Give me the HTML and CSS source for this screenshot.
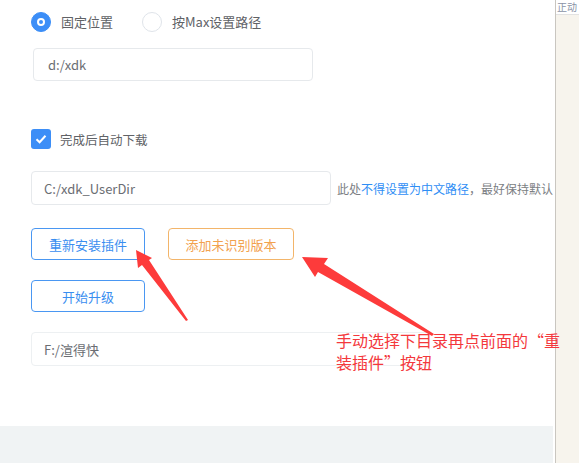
FILE: index.html
```html
<!DOCTYPE html>
<html lang="zh-CN">
<head>
<meta charset="utf-8">
<title>设置</title>
<link rel="stylesheet" href="styles.css">
</head>
<body>
<div class="page">
  <div class="panel">
    <div class="content">
      <div class="radio-row">
        <label class="radio"><span class="radio-dot checked"></span><span class="radio-label">固定位置</span></label>
        <label class="radio"><span class="radio-dot"></span><span class="radio-label">按Max设置路径</span></label>
      </div>
      <div class="input input-a">d:/xdk</div>
      <label class="check-row"><span class="checkbox"><svg width="12" height="10" viewBox="0 0 12 10"><path d="M1.5 5.2 L4.6 8.2 L10.5 1.8" fill="none" stroke="#fff" stroke-width="2"/></svg></span><span class="check-label">完成后自动下载</span></label>
      <div class="input-row">
        <div class="input input-b">C:/xdk_UserDir</div>
        <span class="hint">此处<span class="hint-blue">不得设置为中文路径</span>，最好保持默认</span>
      </div>
      <div class="btn-row">
        <button class="btn btn-blue btn-a">重新安装插件</button>
        <button class="btn btn-orange">添加未识别版本</button>
      </div>
      <div class="btn-row2">
        <button class="btn btn-blue btn-a">开始升级</button>
      </div>
      <div class="input input-c">F:/渲得快</div>
    </div>
    <div class="footer"></div>
  </div>
  <div class="side">
    <div class="side-top">正动</div>
    <div class="side-body"></div>
  </div>
  <div class="annot">
    <svg class="arrows" width="579" height="463" viewBox="0 0 579 463">
      <path d="M136 250 L138 268 L142 265 L186 321 L188 320 L149 260 L152 258 Z" fill="#fd3b3b"/>
      <path d="M302 257 L315 277 L318 272 L432 336 L434 334 L324 264 L328 258 Z" fill="#fd3b3b"/>
    </svg>
    <div class="note">手动选择下目录再点前面的“重<br>装插件”按钮</div>
  </div>
</div>
</body>
</html>
```
FILE: styles.css
```css
* { box-sizing: border-box; }
html, body { margin: 0; padding: 0; }
body {
  font-family: "Noto Sans CJK SC", "Liberation Sans", sans-serif;
  font-size: 13px;
  color: #606266;
  width: 579px;
  height: 463px;
  overflow: hidden;
  background: #fff;
}
.page {
  position: relative;
  display: flex;
  width: 579px;
  height: 463px;
}
.panel {
  width: 555px;
  flex-shrink: 0;
  height: 463px;
  display: flex;
  flex-direction: column;
  background: #fff;
  overflow: hidden;
}
.content {
  height: 426px;
  padding: 12px 0 0 31px;
}
.footer {
  flex: 1;
  background: #f0f3f4;
  margin-right: 2px;
}
.radio-row {
  display: flex;
  align-items: center;
  height: 20px;
}
.radio {
  display: flex;
  align-items: center;
}
.radio + .radio { margin-left: 29px; }
.radio-dot {
  width: 20px;
  height: 20px;
  border-radius: 50%;
  border: 1px solid #dfe4ea;
  background: #fff;
  position: relative;
}
.radio-dot.checked {
  background: #3c8ef7;
  border-color: #3c8ef7;
}
.radio-dot.checked::after {
  content: "";
  position: absolute;
  left: 5px;
  top: 5px;
  width: 8px;
  height: 8px;
  border-radius: 50%;
  background: #3c8ef7;
  border: 2px solid #fff;
  box-sizing: border-box;
}
.radio-label {
  margin-left: 10px;
  line-height: 20px;
  color: #606266;
}
.input {
  height: 34px;
  border: 1px solid #e6e9ec;
  border-radius: 4px;
  background: #fff;
  display: flex;
  align-items: center;
  padding-left: 12px;
  color: #6b6e73;
  flex-shrink: 0;
}
.input-a {
  margin: 16px 0 0 2px;
  width: 280px;
  height: 33px;
  padding-left: 14px;
}
.check-row {
  display: flex;
  align-items: center;
  margin-top: 48px;
  height: 20px;
}
.checkbox {
  width: 20px;
  height: 20px;
  border-radius: 3px;
  background: #3c8ef7;
  display: flex;
  align-items: center;
  justify-content: center;
}
.check-label {
  margin-left: 9px;
  color: #606266;
  font-size: 12.5px;
}
.input-row {
  display: flex;
  align-items: center;
  margin-top: 22px;
  white-space: nowrap;
}
.input-b { width: 300px; }
.hint {
  margin-left: 6px;
  color: #7b7e83;
  font-size: 12px;
  flex-shrink: 0;
}
.hint-blue { color: #2f8ef5; }
.btn-row {
  display: flex;
  margin-top: 23px;
}
.btn-row2 {
  display: flex;
  margin-top: 20px;
}
.btn {
  height: 32px;
  border-radius: 4px;
  background: #fff;
  font-family: inherit;
  font-size: 13px;
  padding: 0;
}
.btn-blue {
  border: 1px solid #4a97f2;
  color: #3a8ef0;
}
.btn-a { width: 114px; }
.btn-orange {
  width: 126px;
  margin-left: 23px;
  border: 1px solid #f3b56a;
  color: #f2a24f;
}
.input-c {
  margin-top: 20px;
  width: 399px;
  border-color: #edf0f2;
}
.side {
  width: 24px;
  height: 463px;
  display: flex;
  flex-direction: column;
  box-shadow: inset 3px 0 2px -1px #cfcbc3;
  border-left: 1px solid #c9c6c0;
}
.side-top {
  height: 15px;
  background: #fff;
  border-bottom: 1px solid #e2e2e2;
  font-size: 10px;
  line-height: 13px;
  color: #8a93a6;
  overflow: hidden;
  white-space: nowrap;
  padding-left: 1px;
}
.side-body {
  flex: 1;
  background: #f7f4ed;
}
.annot {
  position: absolute;
  left: 0;
  top: 0;
  width: 579px;
  height: 463px;
  pointer-events: none;
}
.arrows {
  position: absolute;
  left: 0;
  top: 0;
}
.note {
  position: absolute;
  left: 336px;
  top: 329px;
  font-size: 16px;
  line-height: 22px;
  color: #f4383c;
  white-space: nowrap;
}
```
